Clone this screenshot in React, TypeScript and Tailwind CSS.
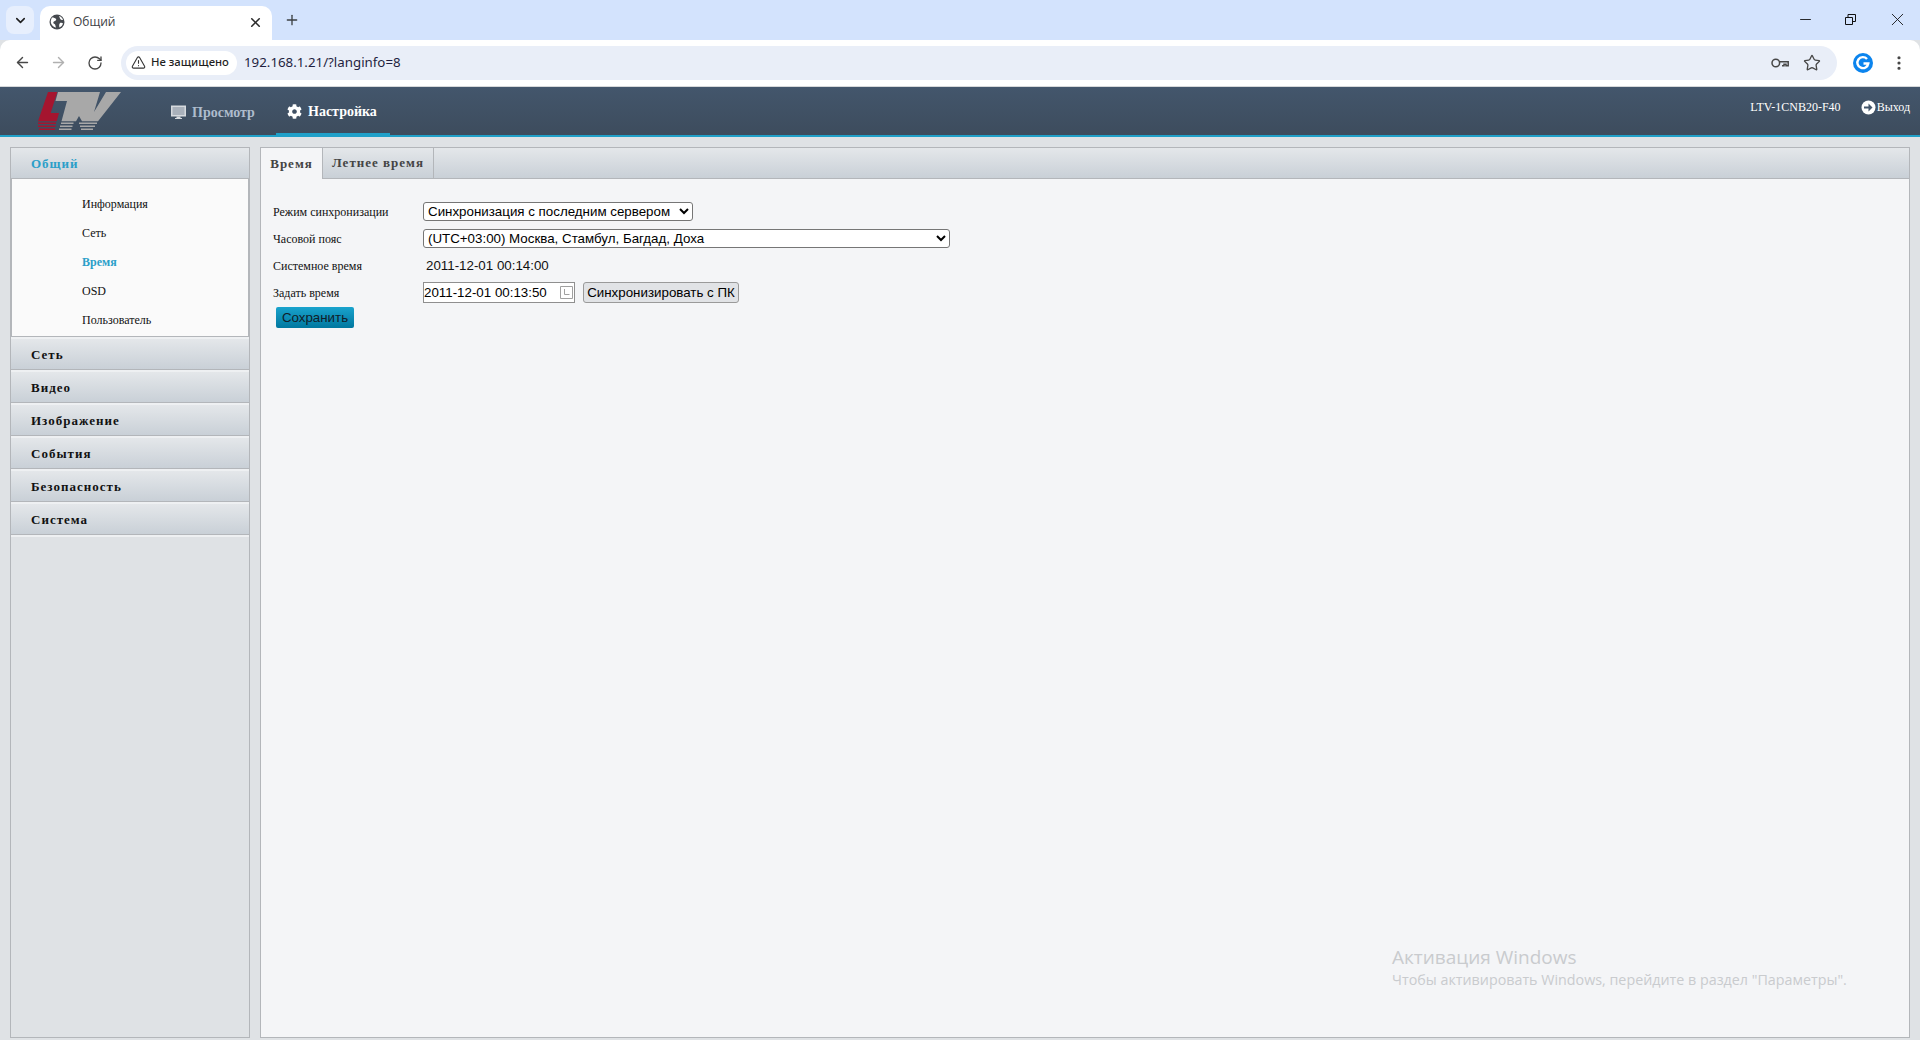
import { ArrowLeft, ArrowRight, RotateCw, Star, Plus, X, ChevronDown, Minus, EllipsisVertical, TriangleAlert } from "lucide-react";
import { FaCog } from "react-icons/fa";

const sections = ["Сеть", "Видео", "Изображение", "События", "Безопасность", "Система"];
const subItems = ["Информация", "Сеть", "Время", "OSD", "Пользователь"];

function Logo() {
  return (
    <svg width="86" height="39" viewBox="0 0 86 39" className="block">
      <path d="M10 0h9.300L12.700 21H21l-2.300 8.300H0z" fill="#a5152f" />
      <path d="M0 30.500h18v1.500H0zM0 33.500h17.500v1.500H0zM1 36.500h16v1.500H1z" fill="#a5152f" />
      <path d="M20 0h42l-6 20L68 0h15L60 29.300H44L41 24l-3 5.300H23.500L29 9H17.500z" fill="#a8a8a8" />
      <path d="M23 30.500h12.500v1.500H23zM41 30.500h18v1.500H41zM22 33.500h12.500v1.500H22zM42 33.500h15v1.500H42zM21 36.500h12.500v1.500H21zM43 36.500h12v1.500H43z" fill="#a8a8a8" />
    </svg>
  );
}

function Globe() {
  return (
    <svg width="16" height="16" viewBox="0 0 16 16">
      <circle cx="8" cy="8" r="7.500" fill="#45494e" />
      <path d="M3 3.500c2 0 3 .5 4 1.500S6 7 5 7.500 4 9.500 5.500 10c1 .5 1 2 1.500 3.500C4 13 1.500 10 1.800 7c.2-1.500.7-2.700 1.200-3.500zM10 2c2 .6 3.500 2 4 4-1.500 0-2.500-.5-3-1.500S10.500 3 10 2zM11 9c1.500-.5 2.500 0 3 .5-.5 2-1.800 3.300-3.500 4-.5-1.500-.5-3.500.5-4.500z" fill="#fff" />
    </svg>
  );
}

function KeyIcon() {
  return (
    <svg width="18" height="10" viewBox="0 0 18 10" fill="none" stroke="#474747" strokeWidth="1.500">
      <circle cx="4.800" cy="5" r="3.800" />
      <path d="M8.600 3.800h8.600v4h-2.200V6.300h-2v1.500h-2" />
    </svg>
  );
}

function GrammarlyG() {
  return (
    <svg width="20" height="20" viewBox="0 0 20 20">
      <circle cx="10" cy="10" r="10" fill="#0b84ee" />
      <path d="M14 6a5.500 5.500 0 1 0 1.300 4.500H10.500" fill="none" stroke="#fff" strokeWidth="2.400" />
    </svg>
  );
}

function MonitorIcon() {
  return (
    <svg width="15" height="15" viewBox="0 0 15 15">
      <rect x="0.750" y="1.250" width="13.500" height="9.500" fill="#a9b1bb" stroke="#d6dade" strokeWidth="1.500" />
      <path d="M5.500 11.500h4v1.500h1.500v1H4v-1h1.500z" fill="#d6dade" />
    </svg>
  );
}

function AccordionHead({ label, active }: { label: string; active?: boolean }) {
  return (
    <div
      className={`h-[31px] flex items-center pl-[20px] pt-[1px] bg-gradient-to-b from-[#e4e7ea] to-[#c9d0d7] border-b border-[#b3b6ba] text-[13px] font-bold tracking-[1px] ${
        active ? "text-[#2b9fc9]" : "text-[#111111]"
      }`}
    >
      {label}
    </div>
  );
}

function Row({ label, children }: { label: string; children: React.ReactNode }) {
  return (
    <div className="flex items-center h-[27px]">
      <div className="w-[150px] text-[12px] text-[#111111]">{label}</div>
      {children}
    </div>
  );
}

export default function App() {
  return (
    <div className="w-[1920px] h-[1040px] flex flex-col overflow-hidden bg-[#dfe2e5] relative font-['Liberation_Serif',serif]">
      {/* tab strip */}
      <div className="h-[40px] bg-[#d3e3fd] flex items-end shrink-0 font-['Open_Sans',sans-serif]">
        <div className="w-[28px] h-[28px] ml-[6px] mb-[6px] rounded-lg bg-[#e7effd] flex items-center justify-center">
          <ChevronDown size={15} strokeWidth={2.500} color="#1f1f1f" />
        </div>
        <div className="ml-[6px] w-[232px] h-[34px] bg-white rounded-t-[10px] flex items-center pl-[9px] pr-[9px] pb-[2px]">
          <Globe />
          <span className="ml-[8px] text-[12px] text-[#3c4043]">Общий</span>
          <X size={15} strokeWidth={2.500} color="#2a2a2a" className="ml-auto" />
        </div>
        <Plus size={16} strokeWidth={2} color="#3c4043" className="ml-[12px] mb-[12px]" />
        <div className="ml-auto flex items-center mb-[10px] pr-[12px] gap-[28px]">
          <Minus size={17} strokeWidth={1.250} color="#111" />
          <svg width="17" height="17" viewBox="0 0 17 17" fill="none" stroke="#111" strokeWidth="1">
            <path d="M3.500 6.500h7v7h-7zM6 6.500V3.500h7.500v7h-3" />
          </svg>
          <X size={21} strokeWidth={1} color="#111" />
        </div>
      </div>

      {/* toolbar */}
      <div className="h-[47px] bg-white rounded-t-[10px] border-b border-[#d6d8da] flex items-center shrink-0 font-['Open_Sans',sans-serif] pb-[1px]">
        <ArrowLeft size={17} strokeWidth={2} color="#474747" className="ml-[14px]" />
        <ArrowRight size={17} strokeWidth={2} color="#b0b0b0" className="ml-[19px]" />
        <RotateCw size={16} strokeWidth={2} color="#474747" className="ml-[20px]" />
        <div className="ml-[18px] w-[1716px] h-[34px] rounded-full bg-[#e9eef8] flex items-center pl-[5px] pr-[16px]">
          <div className="w-[111px] h-[24px] rounded-full bg-white flex items-center pl-[5px] gap-[5px] text-[#1f1f1f]">
            <TriangleAlert size={15} strokeWidth={1.750} color="#333" />
            <span className="font-medium font-['Noto_Sans',sans-serif] text-[11.300px]">Не защищено</span>
          </div>
          <span className="ml-[7px] pt-[1px] text-[13.300px] text-[#1f1f3f] font-['Noto_Sans',sans-serif]">192.168.1.21/?langinfo=8</span>
          <div className="ml-auto flex items-center gap-[14px]">
            <KeyIcon />
            <Star size={18} strokeWidth={1.750} color="#474747" />
          </div>
        </div>
        <div className="ml-[16px]">
          <GrammarlyG />
        </div>
        <EllipsisVertical size={18} strokeWidth={2.250} color="#474747" className="ml-[17px]" />
      </div>

      {/* device header */}
      <div className="h-[50px] shrink-0 bg-gradient-to-b from-[#43566c] to-[#3d4c5d] border-b-[2px] border-[#20a0c8] flex">
        <div className="ml-[38px] mt-[5px]">
          <Logo />
        </div>
        <div className="ml-[47px] w-[105px] flex items-center pt-[2px] gap-[6px] text-[#aebccd] text-[14px] font-bold">
          <MonitorIcon />
          Просмотр
        </div>
        <div className="w-[114px] -mb-[2px] pl-[11px] border-b-[4px] border-[#20a0c8] flex items-center pt-[2px] gap-[6px] text-white text-[14px] font-bold">
          <FaCog size={15} color="#fff" />
          Настройка
        </div>
        <div className="ml-auto flex items-start pt-[11px] pr-[10px] text-white text-[12px]">
          <span>LTV-1CNB20-F40</span>
          <span className="ml-[20px] flex items-center">
            <svg width="15" height="15" viewBox="0 0 15 15" className="mr-[1px]">
              <circle cx="7.500" cy="7.500" r="7" fill="#fff" />
              <path d="M3 6.500h4.500V3.500l4 4-4 4V8.500H3z" fill="#43566c" />
            </svg>
            Выход
          </span>
        </div>
      </div>

      {/* body */}
      <div className="flex-1 flex gap-[10px] px-[10px] pt-[10px] pb-[2px] min-h-0">
        <div className="w-[240px] border border-[#b3b6ba] flex flex-col">
          <AccordionHead label="Общий" active />
          <div className="h-[158px] bg-[#fafafa] border-x border-b border-[#b3b6ba] pl-[70px] pt-[10px] flex flex-col text-[12px] text-[#111111]">
            {subItems.map((s) => (
              <div key={s} className={`h-[29px] shrink-0 flex items-center ${s === "Время" ? "text-[#2b9fc9] font-bold" : ""}`}>
                {s}
              </div>
            ))}
          </div>
          <div className="flex flex-col">
            {sections.map((s) => (
              <div key={s} className="pt-[2px] bg-[#eef0f2]">
                <AccordionHead label={s} />
              </div>
            ))}
          </div>
          <div className="h-[2px] bg-[#eef0f2]" />
        </div>

        <div className="flex-1 border border-[#b3b6ba] bg-[#f4f5f7] flex flex-col">
          <div className="h-[31px] shrink-0 bg-gradient-to-b from-[#e4e7ea] to-[#c9d0d7] border-b border-[#b3b6ba] flex text-[13px] font-bold tracking-[1px] text-[#444444]">
            <div className="w-[62px] -mb-[1px] h-[31px] bg-[#f4f5f7] border-r border-[#b3b6ba] flex items-center justify-center">
              Время
            </div>
            <div className="w-[111px] border-r border-[#b3b6ba] flex items-center justify-center">
              Летнее время
            </div>
          </div>
          <div className="pl-[12px] pt-[19px] flex flex-col">
            <Row label="Режим синхронизации">
              <select className="w-[270px] h-[19px] bg-white border border-[#767676] rounded-[3px] text-[13.330px] pl-[0px] font-['Liberation_Sans',sans-serif] text-black appearance-auto outline-none">
                <option>Синхронизация с последним сервером</option>
              </select>
            </Row>
            <Row label="Часовой пояс">
              <select className="w-[527px] h-[19px] bg-white border border-[#767676] rounded-[3px] text-[13.330px] pl-[0px] font-['Liberation_Sans',sans-serif] text-black appearance-auto outline-none">
                <option>(UTC+03:00) Москва, Стамбул, Багдад, Доха</option>
              </select>
            </Row>
            <Row label="Системное время">
              <span className="ml-[3px] text-[13.330px] font-['Liberation_Sans',sans-serif] text-[#111111]">2011-12-01 00:14:00</span>
            </Row>
            <Row label="Задать время">
              <div className="w-[152px] h-[21px] bg-white border border-[#8f8f8f] flex items-center text-[13.330px] font-['Liberation_Sans',sans-serif] text-black">
                2011-12-01 00:13:50
                <svg width="13" height="13" viewBox="0 0 13 13" fill="none" stroke="#a0a0a0" strokeWidth="1" className="ml-auto mr-[1px]">
                  <path d="M.5.5h12v12H.5zM4.500 3v5.500h5" />
                </svg>
              </div>
              <button className="ml-[8px] w-[156px] h-[21px] rounded-[3px] border border-[#9a9a9a] bg-[#e1e3e6] text-[13.330px] font-['Liberation_Sans',sans-serif] text-black">
                Синхронизировать с ПК
              </button>
            </Row>
            <button className="ml-[3px] mt-[1px] w-[78px] h-[21px] rounded-[2px] bg-gradient-to-b from-[#19a3cd] to-[#00779f] text-[13.330px] text-[#10202a] font-['Liberation_Sans',sans-serif]">
              Сохранить
            </button>
          </div>
        </div>
      </div>

      {/* OS watermark */}
      <div className="absolute left-[1392px] top-[944px] font-['Open_Sans',sans-serif] text-[#c9cbce] pointer-events-none">
        <div className="text-[19px] leading-[26px]">Активация Windows</div>
        <div className="text-[14.300px] leading-[20px]">Чтобы активировать Windows, перейдите в раздел "Параметры".</div>
      </div>
    </div>
  );
}
